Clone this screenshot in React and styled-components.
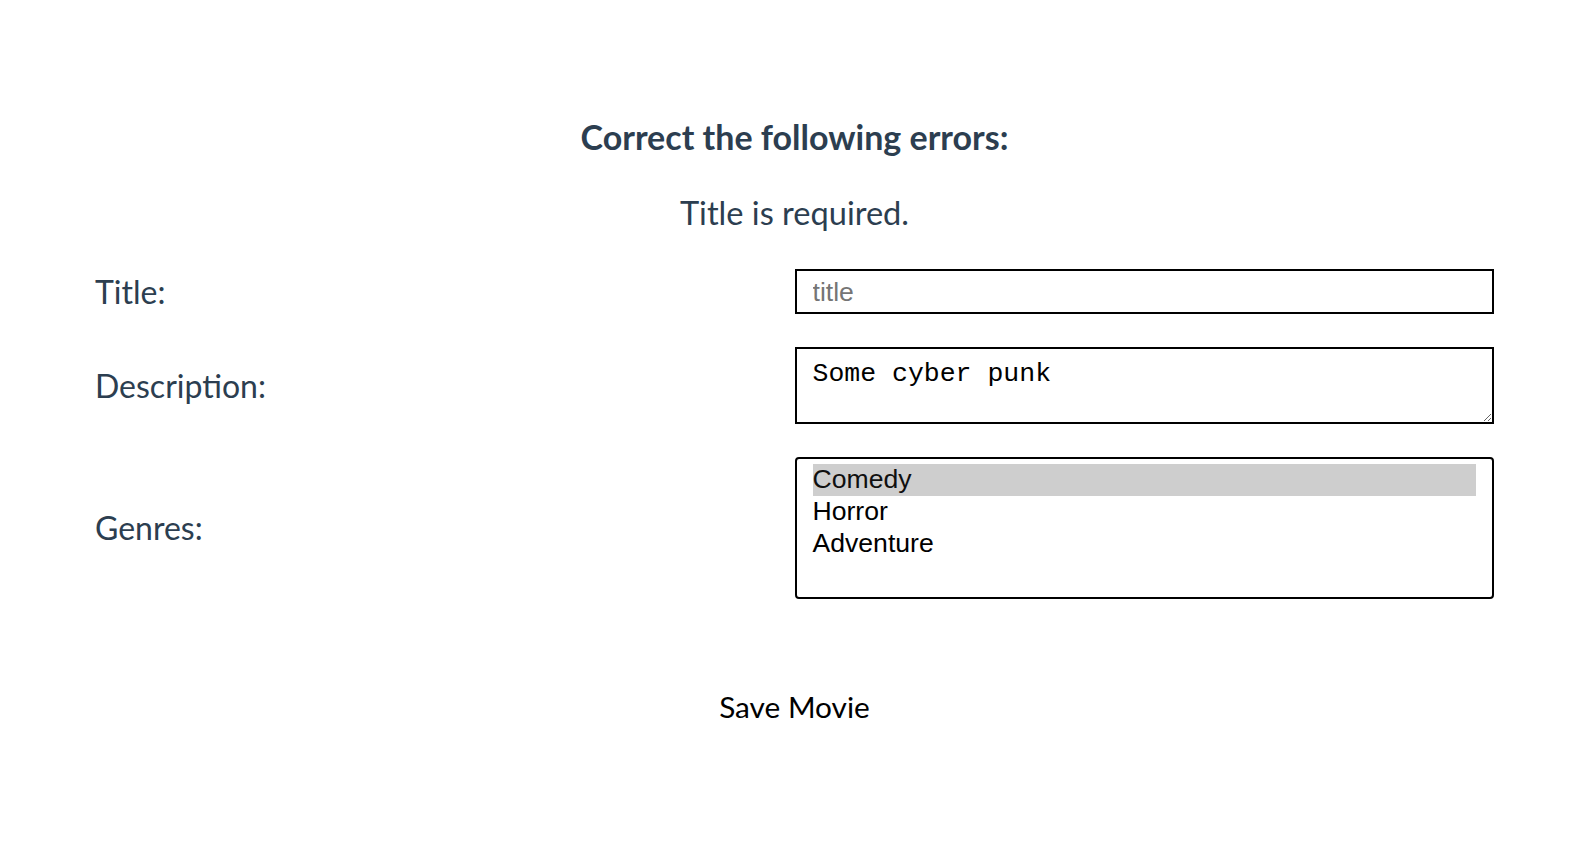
import React from 'react';
import styled, { createGlobalStyle } from 'styled-components';

const GlobalStyle = createGlobalStyle`
  html, body {
    margin: 0;
    padding: 0;
    background: #ffffff;
  }
  body {
    font-family: Lato, "Liberation Sans", sans-serif;
    color: #2c3e50;
  }
`;

const Page = styled.div`
  min-height: 854px;
  box-sizing: border-box;
  padding: 116px 86px 0 95px;
`;

const Heading = styled.h2`
  margin: 0;
  text-align: center;
  font-size: 34px;
  font-weight: 700;
  line-height: 42px;
  color: #2c3e50;
`;

const ErrorText = styled.p`
  margin: 34px 0 0;
  text-align: center;
  font-size: 32.6px;
  line-height: 42px;
  color: #2c3e50;
`;

const Form = styled.form`
  margin-top: 35px;
  display: grid;
  grid-template-columns: 1fr 1fr;
  row-gap: 33px;
  align-items: center;
`;

const Label = styled.label`
  font-size: 32px;
  line-height: 40px;
  color: #2c3e50;
`;

const Input = styled.input`
  box-sizing: border-box;
  width: 100%;
  height: 45px;
  padding: 6px 16px 4px;
  border: 2px solid #000;
  border-radius: 0;
  font-family: "Liberation Sans", Arial, sans-serif;
  font-size: 26.6px;
  color: #000;
  outline: none;

  &::placeholder {
    color: #757575;
  }
`;

const TextArea = styled.textarea`
  box-sizing: border-box;
  width: 100%;
  height: 77px;
  padding: 10px 16px 6px;
  border: 2px solid #000;
  border-radius: 0;
  font-family: "Liberation Mono", "Courier New", monospace;
  font-size: 26.5px;
  color: #000;
  outline: none;
`;

const Select = styled.select`
  box-sizing: border-box;
  width: 100%;
  height: 142px;
  padding: 5px 16px;
  border: 2px solid #000;
  border-radius: 4px;
  font-family: "Liberation Sans", Arial, sans-serif;
  font-size: 26.6px;
  color: #000;
  outline: none;
  overflow: hidden;

  option {
    padding: 0;
    line-height: 32px;
  }
  option:checked {
    background: #cecece;
  }
`;

const Actions = styled.div`
  grid-column: 1 / -1;
  display: flex;
  justify-content: center;
  margin-top: 57px;
`;

const SaveButton = styled.button`
  background: none;
  border: none;
  padding: 0;
  font-family: Lato, sans-serif;
  font-size: 29.8px;
  color: #000;
  cursor: pointer;
`;

export default function App() {
  return (
    <>
      <GlobalStyle />
      <Page>
        <Heading>Correct the following errors:</Heading>
        <ErrorText>Title is required.</ErrorText>
        <Form onSubmit={(e) => e.preventDefault()}>
          <Label htmlFor="title">Title:</Label>
          <Input id="title" placeholder="title" />
          <Label htmlFor="description">Description:</Label>
          <TextArea id="description" defaultValue="Some cyber punk" />
          <Label htmlFor="genres">Genres:</Label>
          <Select id="genres" multiple size={4} defaultValue={['comedy']}>
            <option value="comedy">Comedy</option>
            <option value="horror">Horror</option>
            <option value="adventure">Adventure</option>
          </Select>
          <Actions>
            <SaveButton type="submit">Save Movie</SaveButton>
          </Actions>
        </Form>
      </Page>
    </>
  );
}
